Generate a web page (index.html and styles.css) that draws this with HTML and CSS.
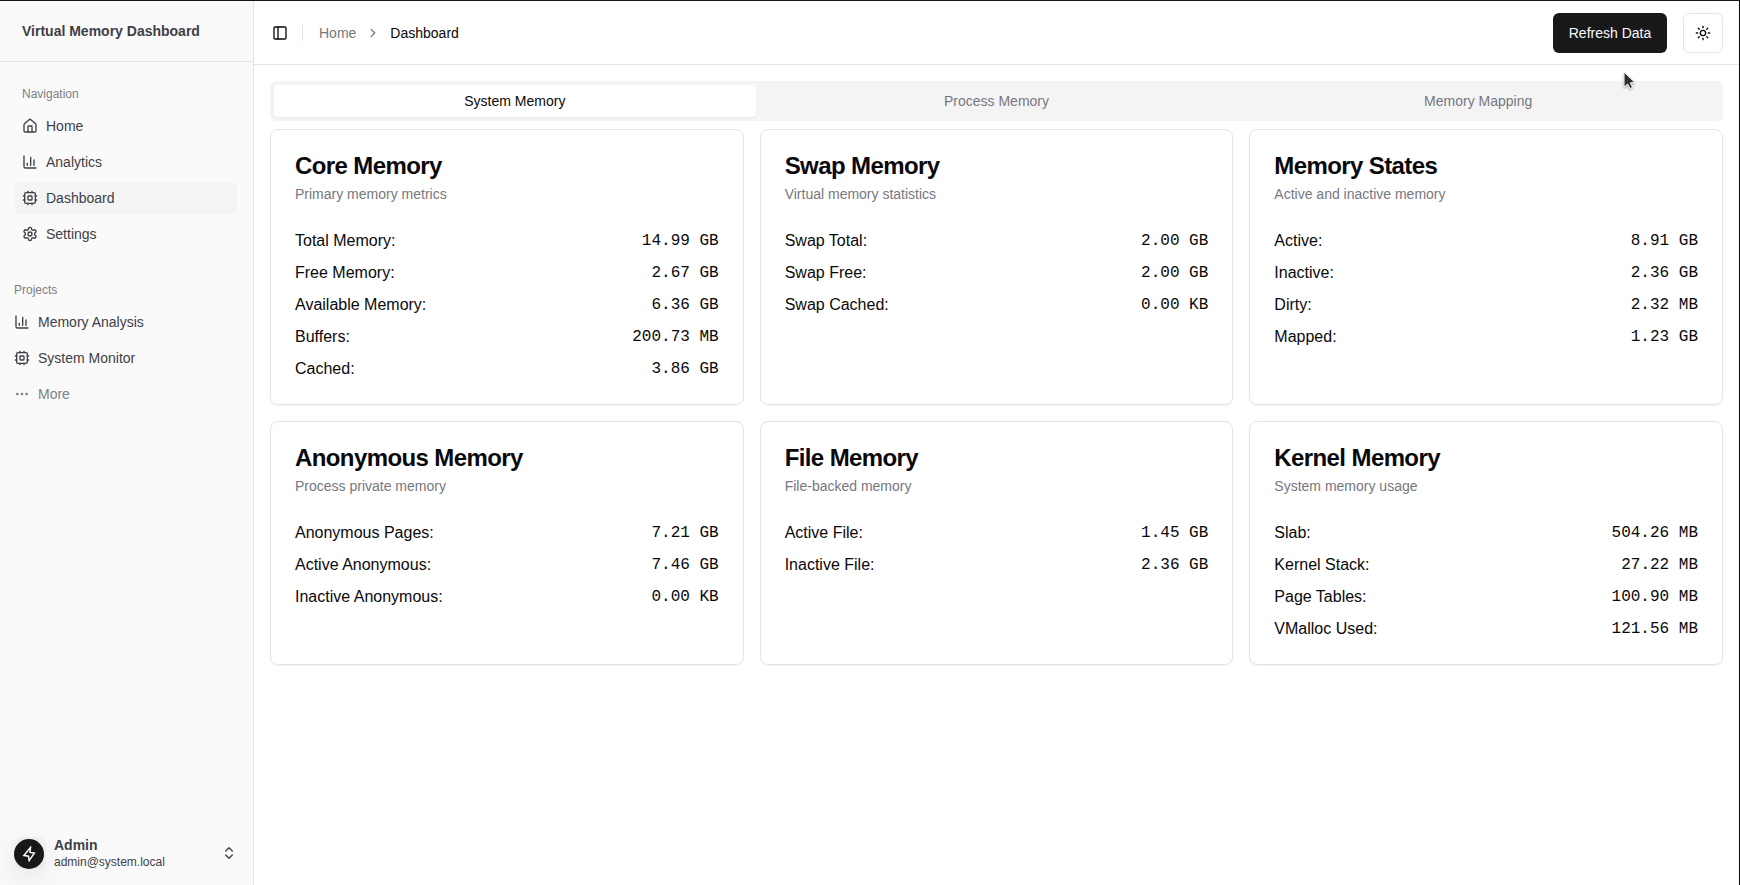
FILE: index.html
```html
<!DOCTYPE html>
<html lang="en">
<head>
<meta charset="utf-8">
<title>Virtual Memory Dashboard</title>
<link rel="stylesheet" href="styles.css">
</head>
<body>
<svg class="sprite" aria-hidden="true">
  <symbol id="house" viewBox="0 0 24 24"><path d="M15 21v-8a1 1 0 0 0-1-1h-4a1 1 0 0 0-1 1v8"/><path d="M3 10a2 2 0 0 1 .709-1.528l7-5.999a2 2 0 0 1 2.582 0l7 5.999A2 2 0 0 1 21 10v9a2 2 0 0 1-2 2H5a2 2 0 0 1-2-2z"/></symbol>
  <symbol id="chart" viewBox="0 0 24 24"><path d="M3 3v16a2 2 0 0 0 2 2h16"/><path d="M18 17V9"/><path d="M13 17V5"/><path d="M8 17v-3"/></symbol>
  <symbol id="cpu" viewBox="0 0 24 24"><rect width="16" height="16" x="4" y="4" rx="2"/><rect width="6" height="6" x="9" y="9" rx="1"/><path d="M15 2v2"/><path d="M15 20v2"/><path d="M2 15h2"/><path d="M2 9h2"/><path d="M20 15h2"/><path d="M20 9h2"/><path d="M9 2v2"/><path d="M9 20v2"/></symbol>
  <symbol id="settings" viewBox="0 0 24 24"><path d="M12.22 2h-.44a2 2 0 0 0-2 2v.18a2 2 0 0 1-1 1.73l-.43.25a2 2 0 0 1-2 0l-.15-.08a2 2 0 0 0-2.73.73l-.22.38a2 2 0 0 0 .73 2.73l.15.1a2 2 0 0 1 1 1.72v.51a2 2 0 0 1-1 1.74l-.15.09a2 2 0 0 0-.73 2.73l.22.38a2 2 0 0 0 2.73.73l.15-.08a2 2 0 0 1 2 0l.43.25a2 2 0 0 1 1 1.73V20a2 2 0 0 0 2 2h.44a2 2 0 0 0 2-2v-.18a2 2 0 0 1 1-1.73l.43-.25a2 2 0 0 1 2 0l.15.08a2 2 0 0 0 2.73-.73l.22-.39a2 2 0 0 0-.73-2.73l-.15-.08a2 2 0 0 1-1-1.74v-.5a2 2 0 0 1 1-1.74l.15-.09a2 2 0 0 0 .73-2.73l-.22-.38a2 2 0 0 0-2.73-.73l-.15.08a2 2 0 0 1-2 0l-.43-.25a2 2 0 0 1-1-1.73V4a2 2 0 0 0-2-2z"/><circle cx="12" cy="12" r="3"/></symbol>
</svg>
<div class="app">
  <aside class="sidebar">
    <div class="brand">Virtual Memory Dashboard</div>
    <nav class="group nav">
      <div class="group-label">Navigation</div>
      <a class="item"><svg class="icon"><use href="#house"/></svg>Home</a>
      <a class="item"><svg class="icon"><use href="#chart"/></svg>Analytics</a>
      <a class="item active"><svg class="icon"><use href="#cpu"/></svg>Dashboard</a>
      <a class="item"><svg class="icon"><use href="#settings"/></svg>Settings</a>
    </nav>
    <nav class="group projects">
      <div class="group-label">Projects</div>
      <a class="item"><svg class="icon"><use href="#chart"/></svg>Memory Analysis</a>
      <a class="item"><svg class="icon"><use href="#cpu"/></svg>System Monitor</a>
      <a class="item more"><svg class="icon" viewBox="0 0 24 24"><circle cx="12" cy="12" r="1"/><circle cx="19" cy="12" r="1"/><circle cx="5" cy="12" r="1"/></svg>More</a>
    </nav>
    <div class="user">
      <span class="avatar"><span class="avatar-disc"><svg class="bolt" viewBox="0 0 16 16"><path d="M9.5 1.4 2.9 9.5l4.6.7.7 4.4 5.1-7.5-4.3-.7z"/></svg></span></span>
      <div class="user-text">
        <div class="user-name">Admin</div>
        <div class="user-mail">admin@system.local</div>
      </div>
      <svg class="icon" viewBox="0 0 24 24"><path d="m7 15 5 5 5-5"/><path d="m7 9 5-5 5 5"/></svg>
    </div>
  </aside>
  <div class="main">
    <header class="topbar">
      <svg class="icon toggle" viewBox="0 0 24 24"><rect width="18" height="18" x="3" y="3" rx="2"/><path d="M9 3v18"/></svg>
      <span class="separator"></span>
      <div class="crumbs">
        <a class="crumb">Home</a>
        <svg class="icon chevron" viewBox="0 0 24 24"><path d="m9 18 6-6-6-6"/></svg>
        <span class="crumb current">Dashboard</span>
      </div>
      <button class="refresh">Refresh Data</button>
      <button class="theme"><svg class="icon" viewBox="0 0 24 24"><circle cx="12" cy="12" r="4"/><path d="M12 2v2"/><path d="M12 20v2"/><path d="m4.93 4.93 1.41 1.41"/><path d="m17.66 17.66 1.41 1.41"/><path d="M2 12h2"/><path d="M20 12h2"/><path d="m6.34 17.66-1.41 1.41"/><path d="m19.07 4.93-1.41 1.41"/></svg></button>
    </header>
    <main class="content">
      <div class="tabs">
        <div class="tab selected">System Memory</div>
        <div class="tab">Process Memory</div>
        <div class="tab">Memory Mapping</div>
      </div>
      <div class="cards">
        <section class="card">
          <h3>Core Memory</h3><p>Primary memory metrics</p>
          <dl>
            <div><dt>Total Memory:</dt><dd>14.99 GB</dd></div>
            <div><dt>Free Memory:</dt><dd>2.67 GB</dd></div>
            <div><dt>Available Memory:</dt><dd>6.36 GB</dd></div>
            <div><dt>Buffers:</dt><dd>200.73 MB</dd></div>
            <div><dt>Cached:</dt><dd>3.86 GB</dd></div>
          </dl>
        </section>
        <section class="card">
          <h3>Swap Memory</h3><p>Virtual memory statistics</p>
          <dl>
            <div><dt>Swap Total:</dt><dd>2.00 GB</dd></div>
            <div><dt>Swap Free:</dt><dd>2.00 GB</dd></div>
            <div><dt>Swap Cached:</dt><dd>0.00 KB</dd></div>
          </dl>
        </section>
        <section class="card">
          <h3>Memory States</h3><p>Active and inactive memory</p>
          <dl>
            <div><dt>Active:</dt><dd>8.91 GB</dd></div>
            <div><dt>Inactive:</dt><dd>2.36 GB</dd></div>
            <div><dt>Dirty:</dt><dd>2.32 MB</dd></div>
            <div><dt>Mapped:</dt><dd>1.23 GB</dd></div>
          </dl>
        </section>
        <section class="card">
          <h3>Anonymous Memory</h3><p>Process private memory</p>
          <dl>
            <div><dt>Anonymous Pages:</dt><dd>7.21 GB</dd></div>
            <div><dt>Active Anonymous:</dt><dd>7.46 GB</dd></div>
            <div><dt>Inactive Anonymous:</dt><dd>0.00 KB</dd></div>
          </dl>
        </section>
        <section class="card">
          <h3>File Memory</h3><p>File-backed memory</p>
          <dl>
            <div><dt>Active File:</dt><dd>1.45 GB</dd></div>
            <div><dt>Inactive File:</dt><dd>2.36 GB</dd></div>
          </dl>
        </section>
        <section class="card">
          <h3>Kernel Memory</h3><p>System memory usage</p>
          <dl>
            <div><dt>Slab:</dt><dd>504.26 MB</dd></div>
            <div><dt>Kernel Stack:</dt><dd>27.22 MB</dd></div>
            <div><dt>Page Tables:</dt><dd>100.90 MB</dd></div>
            <div><dt>VMalloc Used:</dt><dd>121.56 MB</dd></div>
          </dl>
        </section>
      </div>
    </main>
  </div>
</div>
<svg class="cursor" width="14" height="20" viewBox="0 0 14 20"><path d="M1 1v15.2l3.6-3.2 2.4 4.6 2.6-1.3-2.3-4.4 4.6-.4z"/></svg>
</body>
</html>
```
FILE: styles.css
```css
* { box-sizing: border-box; margin: 0; padding: 0; }

body {
  font-family: "Liberation Sans", Arial, sans-serif;
  font-size: 14px;
  line-height: 20px;
  color: #09090b;
  background: #fff;
  overflow: hidden;
}

.sprite { display: none; }

.icon {
  width: 16px;
  height: 16px;
  flex: none;
  fill: none;
  stroke: currentColor;
  stroke-width: 2;
  stroke-linecap: round;
  stroke-linejoin: round;
}

.app {
  display: flex;
  height: 885px;
  border-top: 1px solid #18181b;
  border-right: 1px solid #09090b;
}

/* Sidebar */
.sidebar {
  display: flex;
  flex-direction: column;
  flex: none;
  width: 254px;
  background: #fafafa;
  border-right: 1px solid #e4e4e7;
  color: #3f3f46;
}

.brand {
  height: 61px;
  padding: 20px 22px;
  border-bottom: 1px solid #e4e4e7;
  font-weight: 700;
}

.group { display: flex; flex-direction: column; gap: 4px; padding: 0 16px 0 14px; }
.nav { margin-top: 16px; }
.projects { margin-top: 24px; padding-left: 6px; }

.group-label {
  height: 32px;
  margin-bottom: -4px;
  padding: 0 8px;
  font-size: 12px;
  line-height: 32px;
  color: #7e7e84;
}

.item {
  display: flex;
  align-items: center;
  gap: 8px;
  height: 32px;
  padding: 0 8px;
  border-radius: 6px;
}
.item.active { background: #f4f4f5; }
.item.more { color: #7e7e84; }

.user {
  display: flex;
  align-items: center;
  gap: 8px;
  height: 48px;
  margin-top: auto;
  margin-bottom: 8px;
  padding: 0 16px 0 14px;
}
.avatar {
  display: flex;
  align-items: flex-end;
  width: 32px;
  height: 32px;
  border-radius: 8px;
  background: #f4f4f5;
}
.avatar-disc {
  display: flex;
  align-items: center;
  justify-content: center;
  width: 30px;
  height: 30px;
  border-radius: 50%;
  background: #18181b;
  color: #fff;
  box-shadow: 0 8px 30px rgba(0, 0, 0, 0.12);
}
.bolt {
  width: 16px;
  height: 16px;
  fill: none;
  stroke: currentColor;
  stroke-width: 1.5;
}
.user-text { flex: 1; }
.user-name { padding-top: 1px; font-weight: 700; line-height: 17px; }
.user-mail { font-size: 12px; line-height: 16px; }

/* Top bar */
.main { flex: 1; min-width: 0; }

.topbar {
  display: flex;
  align-items: center;
  height: 64px;
  padding: 0 16px 0 18px;
  border-bottom: 1px solid #e4e4e7;
}
.separator { width: 1px; height: 16px; margin: 0 16px 0 14px; background: #e4e4e7; }
.crumbs { display: flex; align-items: center; gap: 10px; flex: 1; color: #777780; }
.crumb.current { color: #09090b; }
.chevron { width: 14px; height: 14px; }

.refresh {
  width: 114px;
  height: 40px;
  margin-right: 16px;
  border: 0;
  border-radius: 6px;
  background: #18181b;
  color: #fafafa;
  font: inherit;
}
.theme {
  display: flex;
  align-items: center;
  justify-content: center;
  width: 40px;
  height: 40px;
  border: 1px solid #e4e4e7;
  border-radius: 6px;
  background: #fff;
  color: #09090b;
}

/* Content */
.content { padding: 16px; }

.tabs {
  display: grid;
  grid-template-columns: repeat(3, 1fr);
  height: 40px;
  padding: 4px;
  border-radius: 6px;
  background: #f4f4f5;
  color: #777780;
}
.tab { border-radius: 4px; line-height: 32px; text-align: center; }
.tab.selected {
  background: #fff;
  color: #09090b;
  box-shadow: 0 1px 2px rgba(0, 0, 0, 0.05);
}

.cards {
  display: grid;
  grid-template-columns: repeat(3, 1fr);
  gap: 16px;
  margin-top: 8px;
}
.card {
  padding: 24px;
  border: 1px solid #e4e4e7;
  border-radius: 8px;
  box-shadow: 0 1px 2px rgba(0, 0, 0, 0.05);
}
.card h3 { font-size: 24px; line-height: 24px; letter-spacing: -0.6px; }
.card p { margin-top: 6px; color: #777780; }
.card dl {
  display: flex;
  flex-direction: column;
  gap: 8px;
  margin-top: 24px;
  font-size: 16px;
  line-height: 26px;
}
.card dl div { display: flex; justify-content: space-between; height: 24px; }
.card dd { font-family: "Liberation Mono", monospace; }

/* Mouse pointer over the page */
.cursor {
  position: absolute;
  left: 1623px;
  top: 71px;
  fill: #2e2e2e;
  stroke: #fff;
  stroke-width: 1;
  filter: drop-shadow(0 1px 1px rgba(0, 0, 0, 0.35));
}
```
